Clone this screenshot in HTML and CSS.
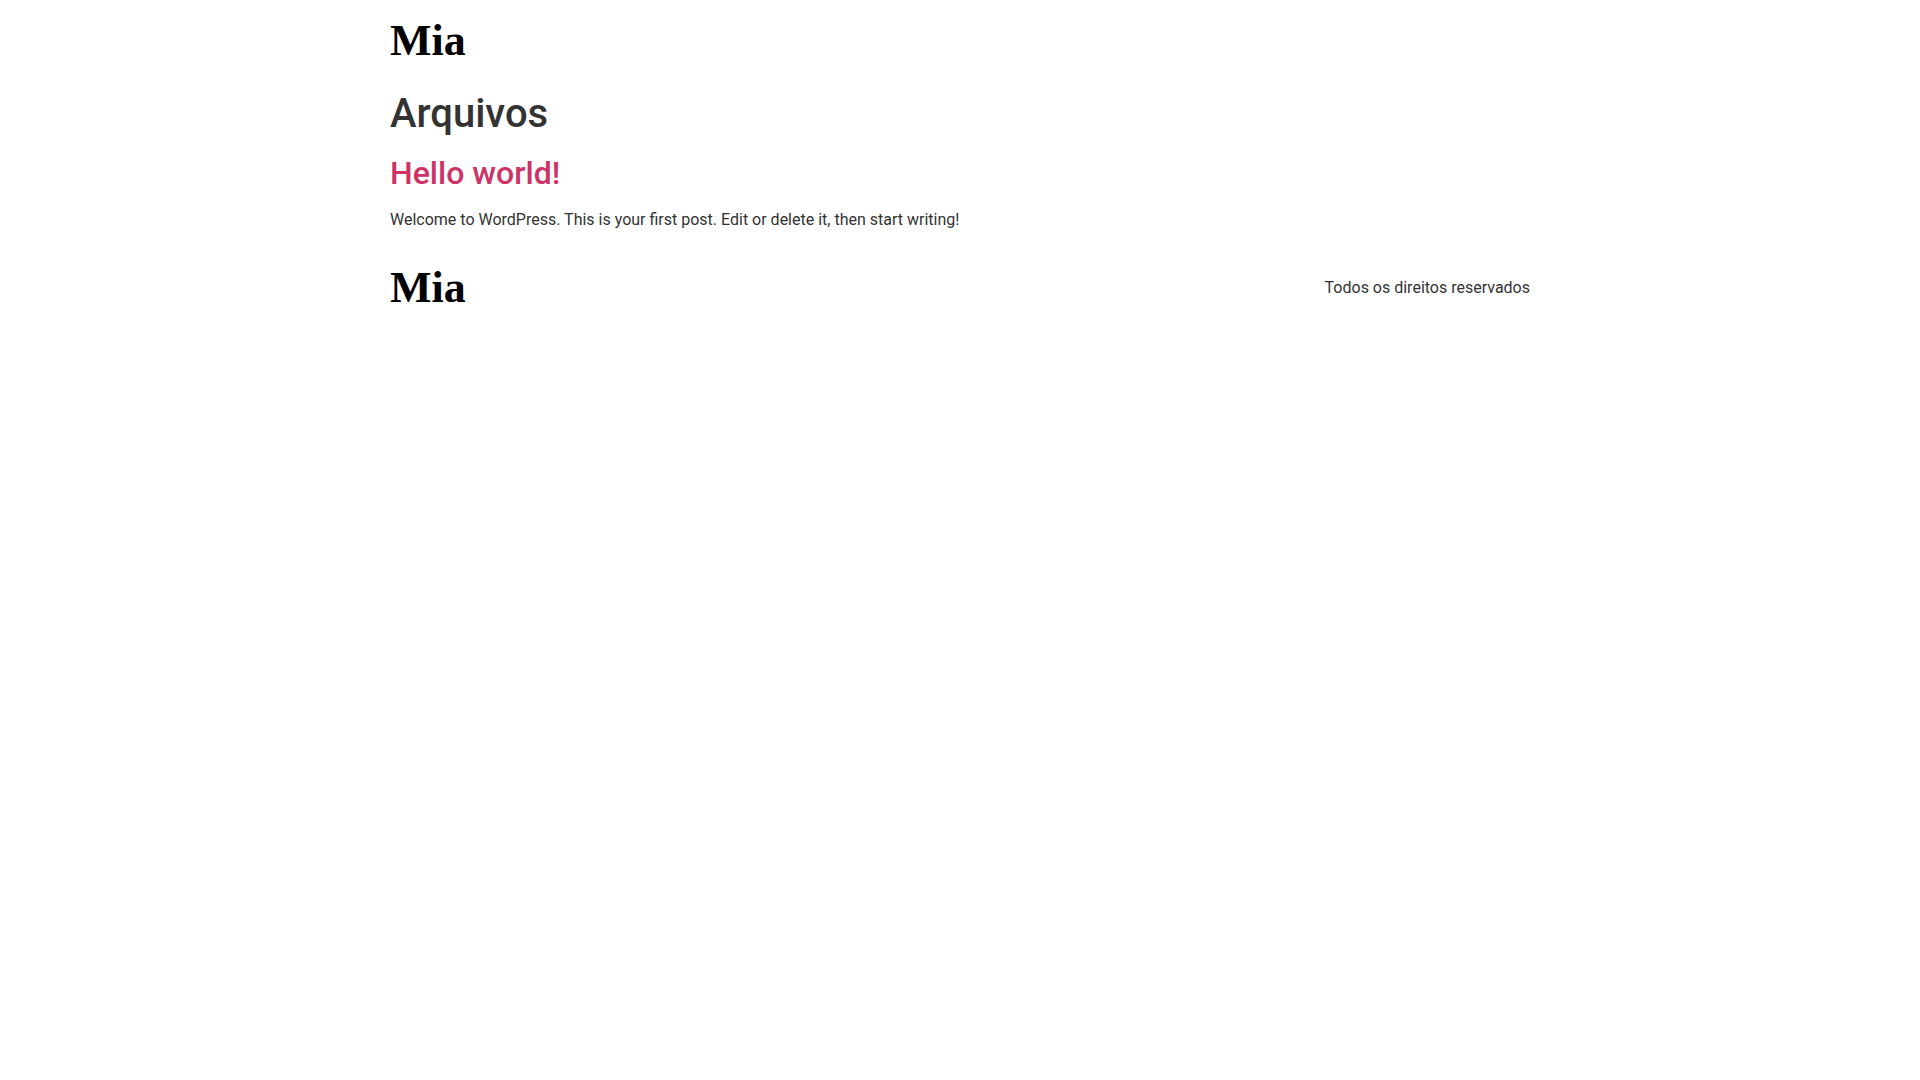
FILE: index.html
```html
<!DOCTYPE html>
<html lang="pt-BR">
<head>
    <meta charset="UTF-8">
    <meta name="viewport" content="width=device-width, initial-scale=1.0">
    <title>Arquivos - Mia</title>
    <link rel="stylesheet" href="styles.css">
</head>
<body>
    <header class="site-header">
        <a class="site-logo" href="#">Mia</a>
    </header>
    <main class="site-main">
        <h1 class="page-title">Arquivos</h1>
        <article class="post">
            <h2 class="post-title"><a href="#">Hello world!</a></h2>
            <p>Welcome to WordPress. This is your first post. Edit or delete it, then start writing!</p>
        </article>
    </main>
    <footer class="site-footer">
        <a class="site-logo" href="#">Mia</a>
        <p class="copyright">Todos os direitos reservados</p>
    </footer>
</body>
</html>
```
FILE: styles.css
```css
* {
    box-sizing: border-box;
}
body {
    margin: 0;
    font-family: Roboto, sans-serif;
    font-size: 16px;
    line-height: 24px;
    color: #333;
    background-color: #fff;
}
.site-header, .site-main, .site-footer {
    max-width: 1140px;
    margin: 0 auto;
}
.site-header, .site-footer {
    display: flex;
    align-items: center;
    justify-content: space-between;
    padding: 16px 0;
}
.site-logo {
    font-family: "Liberation Serif", serif;
    font-size: 44px;
    font-weight: bold;
    line-height: 50px;
    color: #000;
    text-decoration: none;
}
.site-main {
    padding-top: 8px;
}
h1, h2 {
    margin: 0 0 16px;
    font-weight: 500;
}
.page-title {
    font-size: 40px;
    line-height: 48px;
}
.post-title {
    font-size: 32px;
    line-height: 38px;
}
.post-title a {
    color: #c36;
    text-decoration: none;
}
.post-title a:hover {
    color: #336;
}
.post p {
    margin: 0 0 15px;
}
.copyright {
    margin: 0;
}
```
